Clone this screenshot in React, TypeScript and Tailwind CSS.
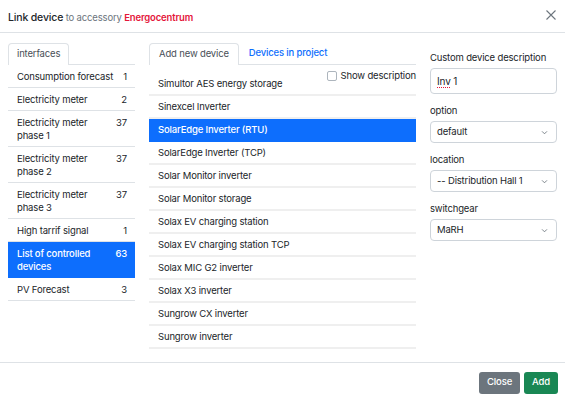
import React from 'react';

const interfaces: { name: string; count: number; active?: boolean }[] = [
    { name: 'Consumption forecast', count: 1 },
    { name: 'Electricity meter', count: 2 },
    { name: 'Electricity meter phase 1', count: 37 },
    { name: 'Electricity meter phase 2', count: 37 },
    { name: 'Electricity meter phase 3', count: 37 },
    { name: 'High tarrif signal', count: 1 },
    { name: 'List of controlled devices', count: 63, active: true },
    { name: 'PV Forecast', count: 3 },
];

const devices = [
    'Simultor AES energy storage',
    'Sinexcel Inverter',
    'SolarEdge Inverter (RTU)',
    'SolarEdge Inverter (TCP)',
    'Solar Monitor inverter',
    'Solar Monitor storage',
    'Solax EV charging station',
    'Solax EV charging station TCP',
    'Solax MIC G2 inverter',
    'Solax X3 inverter',
    'Sungrow CX inverter',
    'Sungrow inverter',
];

function Chevron() {
    return (
        <svg className="w-[7px] h-[7px] text-[#6c757d]" viewBox="0 0 16 16" fill="none" stroke="currentColor" strokeWidth={2} strokeLinecap="round" strokeLinejoin="round">
            <path d="M3 6l5 5 5-5" />
        </svg>
    );
}

function SelectBox({ value }: { value: string }) {
    return (
        <div className="h-[22px] border border-[#ced4da] rounded-[4px] flex items-center justify-between pl-[6px] pr-[8px] text-[9.5px] text-[#212529]">
            <span>{value}</span>
            <Chevron />
        </div>
    );
}

export default function App() {
    return (
        <div className="w-[565px] h-[402px] bg-white flex flex-col text-[#212529] font-['Inter',sans-serif] tracking-[-0.01em] overflow-hidden">
            {/* Header */}
            <div className="h-[33px] shrink-0 border-b border-[#dee2e6] px-[8px] pb-[2px] flex items-center justify-between">
                <div className="leading-none whitespace-nowrap">
                    <span className="text-[10.5px] font-medium">Link device</span>
                    <span className="text-[9.5px] text-[#6c757d]"> to accessory </span>
                    <span className="text-[9.5px] font-semibold text-[#e4163a]">Energocentrum</span>
                </div>
                <svg className="w-[10px] h-[10px] text-[#6c757d] mr-[1px]" viewBox="0 0 10 10" fill="none" stroke="currentColor" strokeWidth={1.1}>
                    <path d="M0.5 0.5l9 9M9.5 0.5l-9 9" />
                </svg>
            </div>

            {/* Body */}
            <div className="flex-1 flex px-[8px] pt-[10px] min-h-0 text-[9.5px]">
                {/* Interfaces */}
                <div className="w-[127px] shrink-0">
                    <div className="flex h-[22px]">
                        <div className="px-[8px] flex items-center border border-b-0 border-[#dee2e6] rounded-t-[4px] text-[#495057]">interfaces</div>
                        <div className="flex-1 border-b border-[#dee2e6]" />
                    </div>
                    <div className="leading-[13px]">
                        {interfaces.map((it) => (
                            <div
                                key={it.name}
                                className={`flex justify-between gap-2 pl-[9px] pr-[8px] py-[4.5px] border-b ${it.active ? 'bg-[#0d6efd] text-white border-[#0d6efd] font-medium' : 'border-[#dee2e6]'}`}
                            >
                                <span>{it.name}</span>
                                <span>{it.count}</span>
                            </div>
                        ))}
                    </div>
                </div>

                {/* Devices */}
                <div className="w-[267px] shrink-0 ml-[14px]">
                    <div className="flex h-[22px]">
                        <div className="px-[9px] flex items-center border border-b-0 border-[#dee2e6] rounded-t-[4px] text-[#495057]">Add new device</div>
                        <div className="px-[10px] flex items-center border-b border-[#dee2e6] text-[#0d6efd] font-medium">Devices in project</div>
                        <div className="flex-1 border-b border-[#dee2e6]" />
                    </div>
                    <div className="relative pt-[8px]">
                        <label className="absolute top-[4px] right-0 flex items-center gap-[4px] bg-white pl-[2px]">
                            <span className="w-[10px] h-[10px] border border-[#adb5bd] rounded-[2px] bg-white" />
                            Show description
                        </label>
                        {devices.map((d) => (
                            <div
                                key={d}
                                className={`h-[23px] flex items-center pl-[9px] ${d === 'SolarEdge Inverter (RTU)' ? 'bg-[#0d6efd] text-white font-medium' : 'pt-[2px] border-b-2 border-[#efefef]'}`}
                            >
                                {d}
                            </div>
                        ))}
                    </div>
                </div>

                {/* Options */}
                <div className="w-[127px] shrink-0 ml-[14px] pt-[8px]">
                    <div className="leading-[13px] mb-[4px]">Custom device description</div>
                    <div className="h-[26px] border border-[#ced4da] rounded-[4px] flex items-center px-[6px] text-[10px]">
                        <span className="underline decoration-dotted decoration-[#e4163a] underline-offset-2">Inv</span>
                        <span>&nbsp;1</span>
                    </div>
                    <div className="leading-[13px] mt-[10px] mb-[4px]">option</div>
                    <SelectBox value="default" />
                    <div className="leading-[13px] mt-[10px] mb-[4px]">location</div>
                    <SelectBox value="-- Distribution Hall 1" />
                    <div className="leading-[13px] mt-[10px] mb-[4px]">switchgear</div>
                    <SelectBox value="MaRH" />
                </div>
            </div>

            {/* Footer */}
            <div className="h-[40px] shrink-0 border-t border-[#dee2e6] flex items-center justify-end gap-[4px] pl-[8px] pr-[7px]">
                <button className="h-[22px] px-[8px] rounded-[3px] bg-[#6c757d] text-white text-[9.5px] font-medium">Close</button>
                <button className="h-[22px] px-[8px] rounded-[3px] bg-[#198754] text-white text-[9.5px] font-medium">Add</button>
            </div>
        </div>
    );
}
